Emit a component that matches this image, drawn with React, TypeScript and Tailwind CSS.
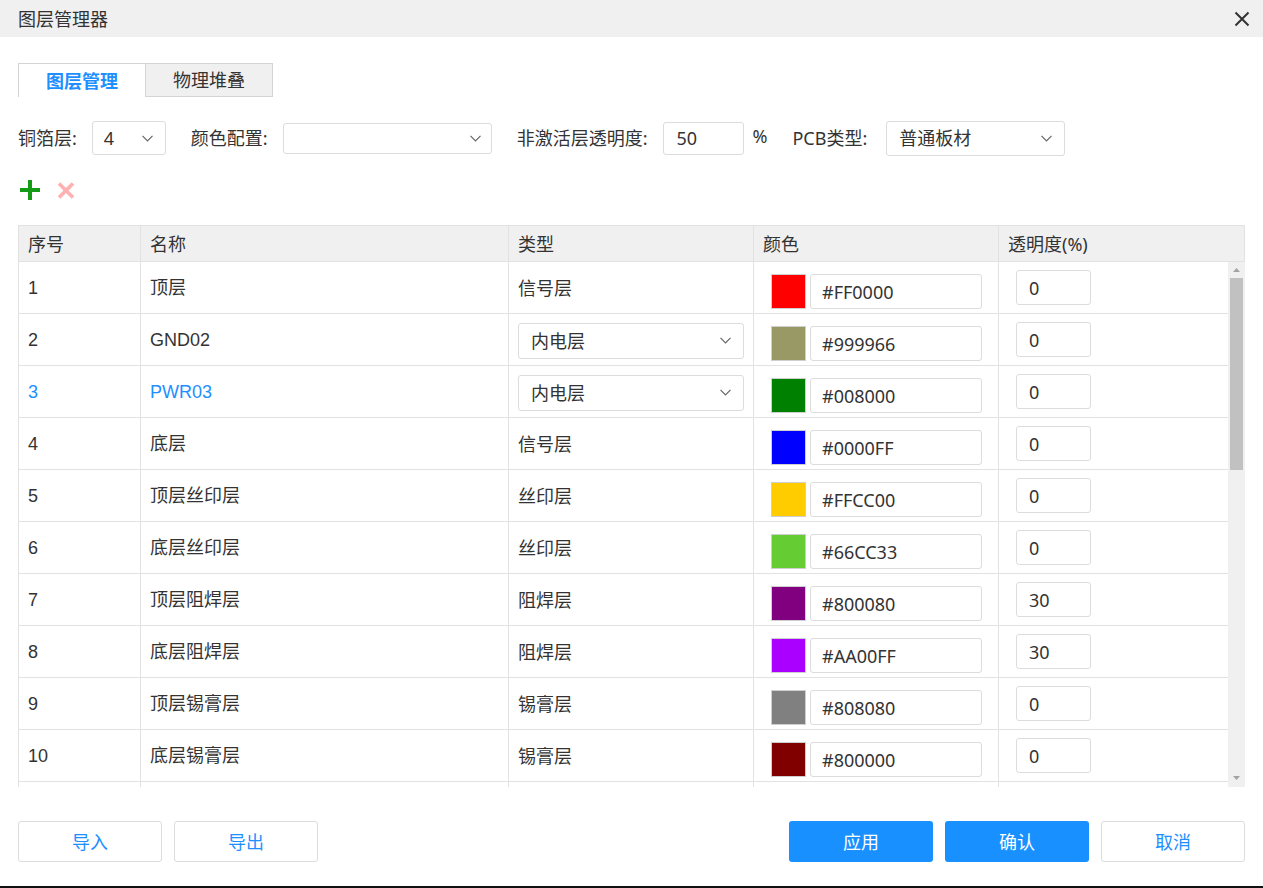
import React from "react";

const FONT = { fontFamily: '"Noto Sans", "Noto Sans CJK SC", sans-serif' };
const ARIAL = { fontFamily: '"Liberation Sans", "Noto Sans CJK SC", sans-serif' };

function Chevron({ className = "" }: { className?: string }) {
  return (
    <svg width="11" height="7" viewBox="0 0 11 7" className={className}>
      <polyline points="0.5,0.8 5.5,5.8 10.5,0.8" fill="none" stroke="#666" strokeWidth="1.2" />
    </svg>
  );
}

type Row = { n: number; name: string; type: string; sel?: boolean; color: string; op: string; active?: boolean };

const rows: Row[] = [
  { n: 1, name: "顶层", type: "信号层", color: "#FF0000", op: "0" },
  { n: 2, name: "GND02", type: "内电层", sel: true, color: "#999966", op: "0" },
  { n: 3, name: "PWR03", type: "内电层", sel: true, color: "#008000", op: "0", active: true },
  { n: 4, name: "底层", type: "信号层", color: "#0000FF", op: "0" },
  { n: 5, name: "顶层丝印层", type: "丝印层", color: "#FFCC00", op: "0" },
  { n: 6, name: "底层丝印层", type: "丝印层", color: "#66CC33", op: "0" },
  { n: 7, name: "顶层阻焊层", type: "阻焊层", color: "#800080", op: "30" },
  { n: 8, name: "底层阻焊层", type: "阻焊层", color: "#AA00FF", op: "30" },
  { n: 9, name: "顶层锡膏层", type: "锡膏层", color: "#808080", op: "0" },
  { n: 10, name: "底层锡膏层", type: "锡膏层", color: "#800000", op: "0" },
];

export default function App() {
  return (
    <div className="w-[1263px] h-[888px] bg-white flex flex-col text-[#333] overflow-hidden" style={FONT}>
      {/* Title bar */}
      <div className="h-[37px] bg-[#f0f0f0] flex items-center justify-between pl-[18px] pr-[13px] shrink-0">
        <span className="text-[18px] leading-none">图层管理器</span>
        <svg width="16" height="16" viewBox="0 0 16 16">
          <path d="M1.5 1.5 L14.5 14.5 M14.5 1.5 L1.5 14.5" stroke="#333" strokeWidth="2" />
        </svg>
      </div>

      <div className="flex-1 flex flex-col px-[18px]">
        {/* Tabs */}
        <div className="flex mt-[26px] h-[34px]">
          <div className="w-[127px] h-[34px] border-l border-t border-[#d4d4d4] bg-white flex items-center justify-center text-[18px] font-bold text-[#1e8fff] leading-none">
            图层管理
          </div>
          <div className="w-[128px] h-[34px] border border-[#d4d4d4] bg-[#f0f0f0] flex items-center justify-center text-[18px] leading-none">
            物理堆叠
          </div>
        </div>

        {/* Toolbar */}
        <div className="flex items-center mt-[24px] h-[34px] text-[18px] leading-none">
          <span>铜箔层:</span>
          <div className="ml-[15px] w-[74px] h-[34px] border border-[#dcdcdc] rounded-[3px] flex items-center justify-between pl-[11px] pr-[12px]">
            <span>4</span>
            <Chevron />
          </div>
          <span className="ml-[25px]">颜色配置:</span>
          <div className="ml-[15px] w-[209px] h-[31px] border border-[#dcdcdc] rounded-[3px] flex items-center justify-end pr-[10px]">
            <Chevron />
          </div>
          <span className="ml-[25px]">非激活层透明度:</span>
          <div className="ml-[16px] w-[81px] h-[33px] border border-[#dcdcdc] rounded-[3px] flex items-center pl-[12px]">
            50
          </div>
          <span className="ml-[8px] -mt-[4px]">%</span>
          <span className="ml-[25px]">PCB类型:</span>
          <div className="ml-[19px] w-[179px] h-[35px] border border-[#dcdcdc] rounded-[3px] flex items-center justify-between pl-[12px] pr-[12px]">
            <span>普通板材</span>
            <Chevron />
          </div>
        </div>

        {/* Icons */}
        <div className="flex items-center mt-[25px] h-[20px] gap-[17px] pl-[2px]">
          <svg width="20" height="20" viewBox="0 0 20 20">
            <path d="M10 0 V20 M0 10 H20" stroke="#169b16" strokeWidth="4" />
          </svg>
          <svg width="18" height="17" viewBox="0 0 18 17">
            <path d="M2 1.5 L16 15.5 M16 1.5 L2 15.5" stroke="#ffb1b1" strokeWidth="3.6" />
          </svg>
        </div>

        {/* Table */}
        <div className="mt-[25px] w-[1227px] flex flex-col">
          <div className="flex h-[37px] bg-[#f0f0f0] border border-[#e2e2e2] text-[18px] leading-none items-stretch">
            <div className="w-[122px] border-r border-[#e2e2e2] flex items-center pl-[9px]">序号</div>
            <div className="w-[368px] border-r border-[#e2e2e2] flex items-center pl-[9px]">名称</div>
            <div className="w-[245px] border-r border-[#e2e2e2] flex items-center pl-[9px]">类型</div>
            <div className="w-[245px] border-r border-[#e2e2e2] flex items-center pl-[9px]">颜色</div>
            <div className="flex-1 flex items-center pl-[9px]">透明度(%)</div>
          </div>
          <div className="flex h-[525px]">
            <div className="w-[1210px] overflow-hidden">
              {rows.map((r) => (
                <div key={r.n} className="flex h-[52px] border-b border-[#e2e2e2] text-[18px] leading-none">
                  <div
                    className={`w-[123px] border-l border-r border-[#e2e2e2] flex items-center pl-[9px] ${r.active ? "text-[#1e8fff]" : ""}`}
                    style={ARIAL}
                  >
                    {r.n}
                  </div>
                  <div
                    className={`w-[368px] border-r border-[#e2e2e2] flex items-center pl-[9px] ${r.active ? "text-[#1e8fff]" : ""}`}
                    style={ARIAL}
                  >
                    {r.name}
                  </div>
                  <div className="w-[245px] border-r border-[#e2e2e2] flex items-center pl-[9px]">
                    {r.sel ? (
                      <div className="w-[226px] h-[36px] border border-[#dcdcdc] rounded-[3px] flex items-center justify-between pl-[12px] pr-[12px] mt-[2px]">
                        <span>内电层</span>
                        <Chevron />
                      </div>
                    ) : (
                      <span>{r.type}</span>
                    )}
                  </div>
                  <div className="w-[245px] border-r border-[#e2e2e2] flex items-center pl-[17px] pt-[8px]">
                    <div className="w-[35px] h-[35px] border border-[#cfcfcf]" style={{ backgroundColor: r.color }} />
                    <div className="ml-[4px] w-[172px] h-[35px] border border-[#dcdcdc] rounded-[3px] flex items-center pl-[11px] pt-[1px]">
                      {r.color}
                    </div>
                  </div>
                  <div className="flex-1 flex items-center pl-[17px]">
                    <div className="w-[75px] h-[35px] border border-[#dcdcdc] rounded-[3px] flex items-center pl-[12px]">
                      {r.op}
                    </div>
                  </div>
                </div>
              ))}
              {/* partially visible next row */}
              <div className="flex h-[52px]">
                <div className="w-[123px] border-l border-r border-[#e2e2e2]" />
                <div className="w-[368px] border-r border-[#e2e2e2]" />
                <div className="w-[245px] border-r border-[#e2e2e2]" />
                <div className="w-[245px] border-r border-[#e2e2e2]" />
                <div className="flex-1" />
              </div>
            </div>
            {/* Scrollbar */}
            <div className="w-[17px] bg-[#f0f0f0] flex flex-col items-center">
              <svg width="9" height="6" viewBox="0 0 9 6" className="mt-[5px]">
                <polygon points="4.5,1 8,5 1,5" fill="#a3a3a3" />
              </svg>
              <div className="mt-[5px] w-[13px] h-[192px] bg-[#c1c1c1]" />
              <div className="flex-1" />
              <svg width="9" height="6" viewBox="0 0 9 6" className="mb-[6px]">
                <polygon points="1,1 8,1 4.5,5" fill="#a3a3a3" />
              </svg>
            </div>
          </div>
        </div>

        {/* Footer */}
        <div className="mt-[34px] flex items-center text-[18px] leading-none">
          <div className="w-[144px] h-[41px] border border-[#dcdcdc] rounded-[3px] flex items-center justify-center text-[#1e8fff]">导入</div>
          <div className="ml-[12px] w-[144px] h-[41px] border border-[#dcdcdc] rounded-[3px] flex items-center justify-center text-[#1e8fff]">导出</div>
          <div className="flex-1" />
          <div className="w-[144px] h-[41px] bg-[#1890ff] rounded-[3px] flex items-center justify-center text-white">应用</div>
          <div className="ml-[12px] w-[144px] h-[41px] bg-[#1890ff] rounded-[3px] flex items-center justify-center text-white">确认</div>
          <div className="ml-[12px] w-[144px] h-[41px] border border-[#dcdcdc] rounded-[3px] flex items-center justify-center text-[#1e8fff]">取消</div>
        </div>
      </div>
      <div className="h-[2px] bg-[#111] shrink-0" />
    </div>
  );
}
